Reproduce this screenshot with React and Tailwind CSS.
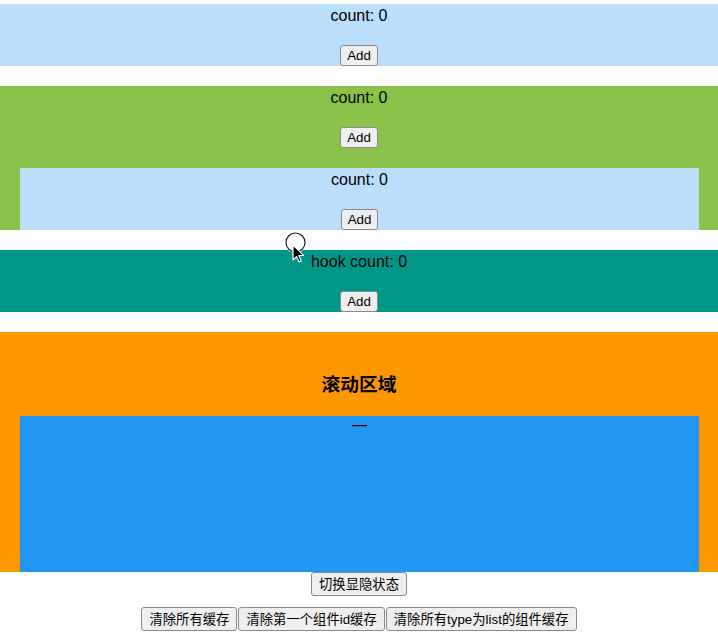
/**
 * Keep-alive demo page: counter blocks, scroll area, cache-clear buttons.
 */
const FONT = { fontFamily: '"Liberation Sans", Arial, "Noto Sans CJK SC", sans-serif' };

function Btn({ children, className = 'h-[24px] px-[7px]' }) {
  return (
    <button
      type="button"
      className={`inline-flex items-center rounded-[3px] border border-[#8a8a8a] bg-[#efefef] text-[13.33px] leading-[17px] text-black ${className}`}
    >
      {children}
    </button>
  );
}

function AddBtn() {
  return <Btn className="h-[21px] px-[6px]">Add</Btn>;
}

function Counter({ label, bg, className = '' }) {
  return (
    <div className={`h-[62px] text-center ${bg} ${className}`}>
      <div className="pt-[1px] text-[16px] leading-[22px]">{label}: 0</div>
      <div className="mt-[18px] flex justify-center">
        <AddBtn />
      </div>
    </div>
  );
}

function Cursor() {
  return (
    <svg className="pointer-events-none absolute left-[284px] top-[232px]" width="24" height="34" viewBox="0 0 24 34">
      <circle cx="11.5" cy="10.5" r="9.5" fill="none" stroke="#fff" strokeWidth="2.5" />
      <circle cx="11.5" cy="10.5" r="9.5" fill="none" stroke="#222" strokeWidth="1.2" />
      <path d="M9 13 L9 28 L12.5 24.6 L15 30 L17.3 29 L14.8 23.6 L19.5 23.4 Z" fill="#000" stroke="#fff" strokeWidth="1.2" strokeLinejoin="round" />
    </svg>
  );
}

export default function App() {
  return (
    <div className="relative min-h-[641px] bg-white pt-[4px] text-black" style={FONT}>
      <Counter label="count" bg="bg-[#bbdefb]" />

      <div className="mt-[20px] bg-[#8bc34a] text-center">
        <div className="pt-[1px] text-[16px] leading-[22px]">count: 0</div>
        <div className="mt-[18px] flex justify-center">
          <AddBtn />
        </div>
        <Counter label="count" bg="bg-[#bbdefb]" className="ml-[20px] mr-[19px] mt-[20px]" />
      </div>

      <Counter label="hook count" bg="bg-[#009688]" className="mt-[20px]" />

      {/* scroll area */}
      <div className="mt-[20px] bg-[#ff9800]">
        <h3 className="h-[84px] pt-[42px] text-center text-[18.72px] font-bold leading-[22px]">滚动区域</h3>
        <div className="ml-[20px] mr-[19px] h-[156px] overflow-hidden bg-[#2196f3] text-center text-[16px] leading-[22px]">
          一
        </div>
      </div>

      <div className="flex justify-center">
        <Btn>切换显隐状态</Btn>
      </div>
      <div className="mt-[11px] flex justify-center gap-[1px]">
        <Btn>清除所有缓存</Btn>
        <Btn>清除第一个组件id缓存</Btn>
        <Btn>清除所有type为list的组件缓存</Btn>
      </div>

      <Cursor />
    </div>
  );
}
